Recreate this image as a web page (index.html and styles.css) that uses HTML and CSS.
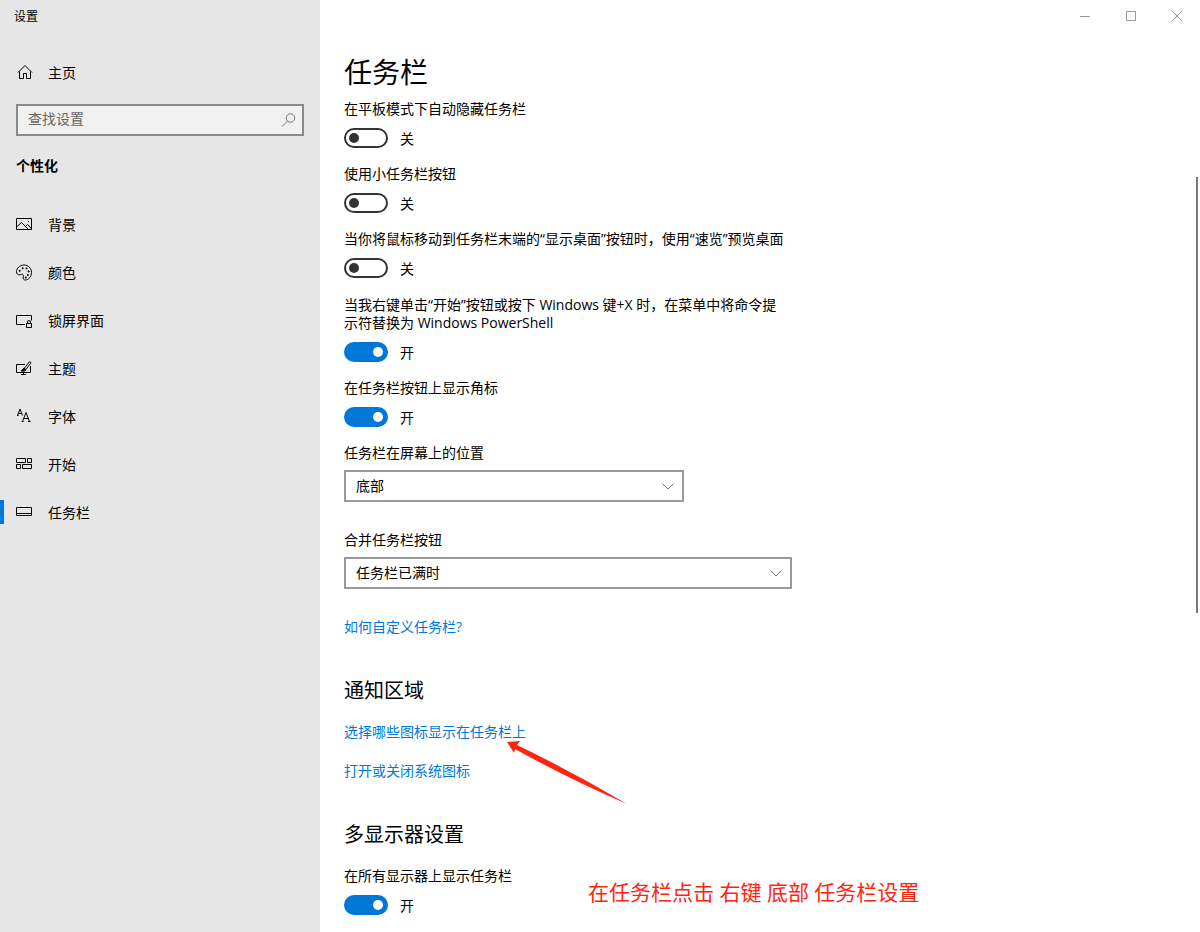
FILE: index.html
```html
<!DOCTYPE html>
<html lang="zh-CN">
<head>
<meta charset="utf-8">
<meta name="viewport" content="width=device-width, initial-scale=1">
<title>设置</title>
<link rel="stylesheet" href="styles.css">
</head>
<body>
<div class="window">
  <aside class="sidebar">
    <div class="app-title">设置</div>
    <a class="nav-link home" href="#home">
      <svg class="icon" viewBox="0 0 16 16"><path d="M2 7.500 9 .5l7 7M3.500 6.500v7h4v-5h3v5h4v-7"/></svg>
      <span>主页</span>
    </a>
    <form class="search">
      <input class="search-input" type="search" placeholder="查找设置" aria-label="查找设置">
      <button class="search-button" type="button" aria-label="搜索">
        <svg class="icon" viewBox="0 0 16 16"><circle cx="10.500" cy="6" r="4.200"/><path d="M7.500 9 2 14.500"/></svg>
      </button>
    </form>
    <h2 class="category">个性化</h2>
    <nav class="nav">
      <a class="nav-link" href="#background">
        <svg class="icon" viewBox="0 0 16 16"><path d="M.5 1.500h15v11H.5zM1 9.500l4.500-4 6.500 6.500M9.500 9.500l2-2 4 4"/><path class="fill" d="M12 4h1v1h-1z"/></svg>
        <span>背景</span>
      </a>
      <a class="nav-link" href="#colors">
        <svg class="icon" viewBox="0 0 16 16"><path d="M8 0C3.800 0 .5 3.100.5 6.700c0 2 1.300 3.200 2.800 3.200 1.400 0 2.200-1 3.200-.6 1 .4.900 1.400.700 2.600-.3 1.700.3 3.100 2 3.100 3.400 0 6.300-3.300 6.300-7.500S12.200 0 8 0z"/><g class="fill"><circle cx="3.700" cy="5.700" r="1"/><circle cx="6.700" cy="3.300" r="1"/><circle cx="10.500" cy="3.500" r="1"/><circle cx="12.600" cy="6.500" r="1"/><circle cx="11.800" cy="10" r="1"/><circle cx="9.800" cy="12.500" r="1"/></g></svg>
        <span>颜色</span>
      </a>
      <a class="nav-link" href="#lockscreen">
        <svg class="icon" viewBox="0 0 16 16"><path d="M9 11.500H.5v-9h15v5M10.500 10.500h5v4h-5zM11.500 10.500V9a1.500 1.500 0 0 1 3 0v1.500"/></svg>
        <span>锁屏界面</span>
      </a>
      <a class="nav-link" href="#themes">
        <svg class="icon" viewBox="0 0 16 16"><path d="M9 3.500H.5v8h14V5M7.500 11.500v2M5 13.500h5M8.300 7.300 13.200 1c.8-.8 2.100.2 1.500 1.200L9.900 8.600M8.300 7.300l1.600 1.300c-.3 1.700-2.400 1.900-4.900 1.400 1.500-.6 1.400-2.600 3.300-2.700"/><path class="fill" d="M8.300 7.300l1.600 1.300C9.500 10 7 10 5 10c1.500-.6 1.400-2.600 3.300-2.700z"/></svg>
        <span>主题</span>
      </a>
      <a class="nav-link" href="#fonts">
        <svg class="icon" viewBox="0 0 16 16"><path d="M1.500 6.500 4 0l2.500 6.500M2.500 4.500h3M6.500 12.500l3.500-9 3.500 9M7.700 9.500h4.600M1 6.500h1.500M5.500 12.500h2M12 12.500h2.500"/></svg>
        <span>字体</span>
      </a>
      <a class="nav-link" href="#start">
        <svg class="icon" viewBox="0 0 16 16"><path d="M.5 1.500h9v4h-9zM11.500 1.500h4v4h-4zM.5 7.500h4v4h-4zM6.500 7.500h9v4h-9z"/></svg>
        <span>开始</span>
      </a>
      <a class="nav-link active" href="#taskbar" aria-current="page">
        <svg class="icon" viewBox="0 0 16 16"><path d="M.5 2.500h15v8H.5zM.5 8.500h15"/></svg>
        <span>任务栏</span>
      </a>
    </nav>
  </aside>

  <main class="main">
    <div class="window-controls">
      <button class="window-button" type="button" aria-label="最小化"><svg class="control-icon" viewBox="0 0 10 10"><path d="M0 5.500h10"/></svg></button>
      <button class="window-button" type="button" aria-label="最大化"><svg class="control-icon" viewBox="0 0 10 10"><path d="M.5.5h9v9h-9z"/></svg></button>
      <button class="window-button" type="button" aria-label="关闭"><svg class="control-icon" viewBox="0 0 10 10"><path d="M0 0l10 10M10 0 0 10"/></svg></button>
    </div>

    <div class="content">
      <h1 class="page-title">任务栏</h1>

      <div class="settings">
        <div class="setting">
          <label class="setting-label" for="tablet-hide">在平板模式下自动隐藏任务栏</label>
          <div class="toggle-row"><input class="toggle" type="checkbox" id="tablet-hide"><span class="state">关</span></div>
        </div>
        <div class="setting">
          <label class="setting-label" for="small-buttons">使用小任务栏按钮</label>
          <div class="toggle-row"><input class="toggle" type="checkbox" id="small-buttons"><span class="state">关</span></div>
        </div>
        <div class="setting">
          <label class="setting-label" for="peek">当你将鼠标移动到任务栏末端的“显示桌面”按钮时，使用“速览”预览桌面</label>
          <div class="toggle-row"><input class="toggle" type="checkbox" id="peek"><span class="state">关</span></div>
        </div>
      </div>

      <div class="settings more">
        <div class="setting">
          <label class="setting-label" for="powershell">当我右键单击“开始”按钮或按下 Windows 键+X 时，在菜单中将命令提示符替换为 Windows PowerShell</label>
          <div class="toggle-row"><input class="toggle" type="checkbox" id="powershell" checked><span class="state">开</span></div>
        </div>
        <div class="setting">
          <label class="setting-label" for="badges">在任务栏按钮上显示角标</label>
          <div class="toggle-row"><input class="toggle" type="checkbox" id="badges" checked><span class="state">开</span></div>
        </div>
      </div>

      <div class="choices">
        <div class="choice">
          <label class="setting-label" for="position">任务栏在屏幕上的位置</label>
          <div class="select-box short">
            <select class="select" id="position"><option>底部</option><option>顶部</option><option>靠左</option><option>靠右</option></select>
            <svg class="chevron" viewBox="0 0 12 7"><path d="M.5.5 6 6 11.500.5"/></svg>
          </div>
        </div>
        <div class="choice">
          <label class="setting-label" for="combine">合并任务栏按钮</label>
          <div class="select-box">
            <select class="select" id="combine"><option>任务栏已满时</option><option>始终隐藏标签</option><option>从不</option></select>
            <svg class="chevron" viewBox="0 0 12 7"><path d="M.5.5 6 6 11.500.5"/></svg>
          </div>
        </div>
        <a class="link" href="#customize">如何自定义任务栏?</a>
      </div>

      <section class="section">
        <h2 class="section-title">通知区域</h2>
        <div class="links">
          <a class="link target" href="#icons">选择哪些图标显示在任务栏上<svg class="arrow" viewBox="0 0 120 64"><path d="M0 1 13 0 10 4Q66 31 120 63 62 38 8 8L7 12z"/></svg></a>
          <a class="link" href="#system-icons">打开或关闭系统图标</a>
        </div>
      </section>

      <section class="section">
        <h2 class="section-title">多显示器设置</h2>
        <div class="setting">
          <label class="setting-label" for="all-displays">在所有显示器上显示任务栏</label>
          <div class="toggle-row"><input class="toggle" type="checkbox" id="all-displays" checked><span class="state">开</span><span class="note">在任务栏点击 右键 底部 任务栏设置</span></div>
        </div>
      </section>
    </div>
    <div class="scroll-thumb"></div>
  </main>
</div>
</body>
</html>
```

FILE: styles.css
```css
* {
  box-sizing: border-box;
}

body {
  margin: 0;
  background: #fff;
  color: #000;
  font-family: "Open Sans", "Noto Sans CJK SC", sans-serif;
  font-size: 14px;
  line-height: 18px;
}

h1,
h2 {
  margin: 0;
}

button,
input,
select {
  margin: 0;
  font: inherit;
  color: inherit;
}

.window {
  display: flex;
  min-height: 100vh;
}

/* Sidebar */
.sidebar {
  flex: 0 0 320px;
  background: #e6e6e6;
}

.app-title {
  padding: 9px 14px 8px;
  font-size: 12px;
  line-height: 16px;
}

.nav-link {
  position: relative;
  display: flex;
  align-items: center;
  gap: 16px;
  height: 48px;
  padding: 0 16px;
  color: #000;
  text-decoration: none;
}

.home {
  margin-top: 16px;
}

.icon {
  flex: none;
  width: 16px;
  height: 16px;
  fill: none;
  stroke: currentColor;
  overflow: visible;
}

.icon .fill {
  fill: currentColor;
  stroke: none;
}

.search {
  display: flex;
  height: 32px;
  margin: 7px 16px 0;
  border: 2px solid #8a8a8a;
  background: #f0f0f0;
}

.search-input {
  flex: 1;
  min-width: 0;
  padding: 0 10px 2px;
  border: 0;
  outline: 0;
  background: transparent;
}

.search-input::placeholder {
  color: #666;
  opacity: 1;
}

.search-button {
  display: flex;
  align-items: center;
  padding: 0 6px;
  border: 0;
  background: transparent;
  color: #777;
}

.category {
  margin: 21px 16px 26px;
  font-size: 14px;
  font-weight: 700;
}

.active::before {
  content: "";
  position: absolute;
  left: 0;
  top: 11px;
  width: 4px;
  height: 24px;
  background: #0078d7;
}

/* Main pane */
.main {
  position: relative;
  flex: 1;
  min-width: 0;
}

.window-controls {
  display: flex;
  justify-content: flex-end;
}

.window-button {
  display: grid;
  place-items: center;
  width: 46px;
  height: 32px;
  padding: 0;
  border: 0;
  background: transparent;
}

.control-icon {
  width: 10px;
  height: 10px;
  fill: none;
  stroke: #999;
}

.content {
  padding: 22px 24px 16px;
}

.page-title {
  margin-bottom: 10px;
  font-size: 28px;
  font-weight: 400;
  line-height: 36px;
}

.settings {
  display: grid;
  gap: 17px;
}

.more {
  margin-top: 18px;
}

.setting {
  display: grid;
  gap: 10px;
}

.setting-label {
  max-width: 446px;
}

.toggle-row {
  position: relative;
  display: flex;
  align-items: center;
  gap: 12px;
  height: 20px;
}

.toggle {
  appearance: none;
  display: flex;
  align-items: center;
  width: 44px;
  height: 20px;
  padding: 0 3px;
  border: 2px solid #333;
  border-radius: 10px;
}

.toggle::before {
  content: "";
  width: 10px;
  height: 10px;
  border-radius: 50%;
  background: #333;
}

.toggle:checked {
  justify-content: flex-end;
  border-color: #0078d7;
  background: #0078d7;
}

.toggle:checked::before {
  background: #fff;
}

.state {
  padding-top: 2px;
}

.choices {
  display: grid;
  gap: 29px;
  justify-items: start;
  margin-top: 17px;
}

.choice {
  display: grid;
  gap: 8px;
  width: 100%;
  max-width: 448px;
}

.select-box {
  position: relative;
}

.short {
  max-width: 340px;
}

.select {
  appearance: none;
  display: block;
  width: 100%;
  height: 32px;
  padding: 0 32px 0 10px;
  border: 2px solid #999;
  border-radius: 0;
  background: #fff;
}

.chevron {
  position: absolute;
  top: 13px;
  right: 10px;
  width: 12px;
  height: 7px;
  fill: none;
  stroke: #777;
  pointer-events: none;
}

.link {
  color: #0078d7;
  text-decoration: none;
}

.section {
  margin-top: 41px;
}

.section-title {
  margin-bottom: 18px;
  font-size: 20px;
  font-weight: 400;
  line-height: 28px;
}

.links {
  display: grid;
  gap: 21px;
  justify-items: start;
}

/* Annotations drawn over the page */
.target {
  position: relative;
}

.arrow {
  position: absolute;
  left: 163px;
  top: 18px;
  width: 120px;
  height: 64px;
  fill: #ff2412;
}

.note {
  position: absolute;
  left: 244px;
  bottom: 9px;
  color: #ff2412;
  font-size: 21px;
  line-height: 28px;
  white-space: nowrap;
}

.scroll-thumb {
  position: absolute;
  top: 177px;
  right: 2px;
  width: 2px;
  height: 436px;
  background: #7a7a7a;
}
```
